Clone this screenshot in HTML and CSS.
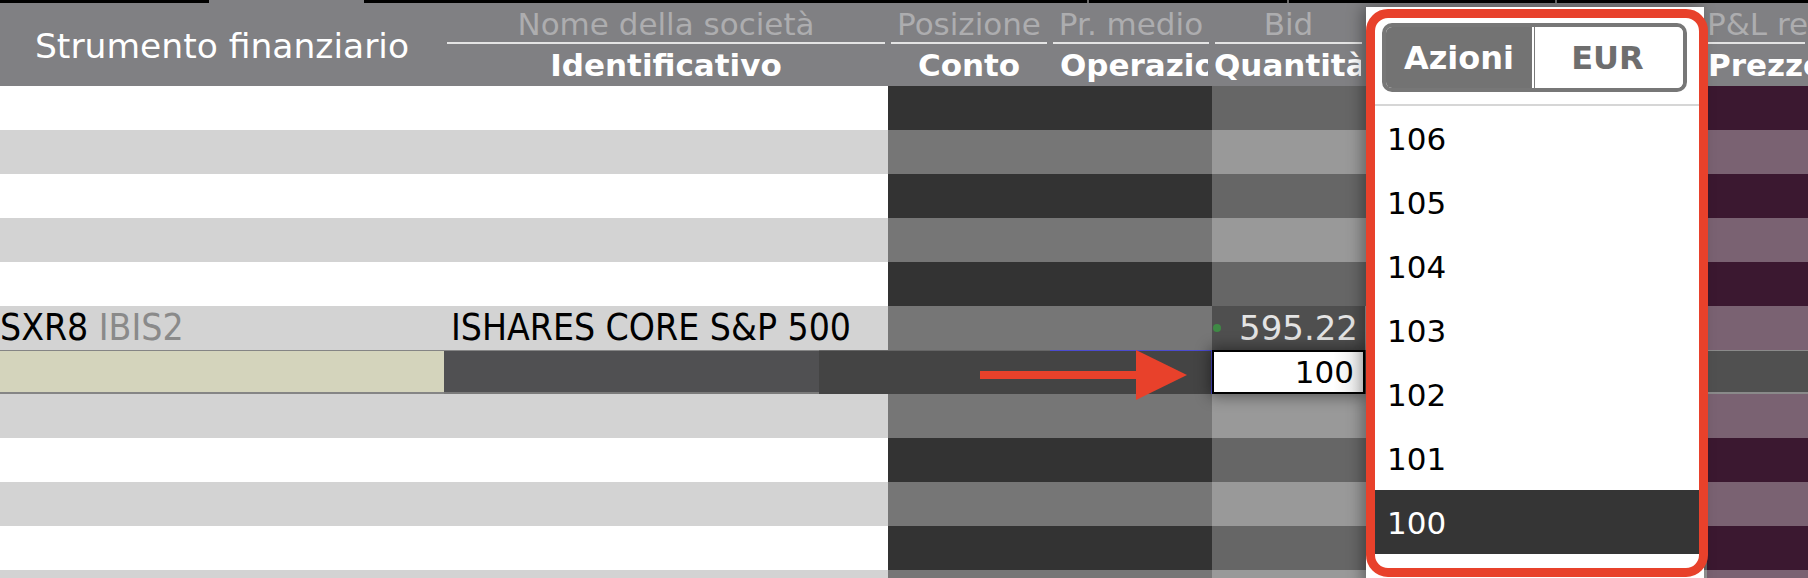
FILE: index.html
```html
<!DOCTYPE html>
<html lang="it">
<head>
    <meta charset="UTF-8">
    <meta name="viewport" content="width=device-width, initial-scale=1.0">
    <title>Portafoglio</title>
    <link rel="stylesheet" href="styles.css">
</head>
<body>
    <div class="screen">
        <div class="tabstrip">
            <span class="tab-lit"></span>
            <span class="tick tick-1"></span>
            <span class="tick tick-2"></span>
            <span class="tick tick-3"></span>
        </div>

        <div class="row head">
            <div class="hc hc-main">Strumento finanziario</div>
            <div class="hc">
                <div class="h-top">Nome della società</div>
                <div class="h-bot">Identificativo</div>
            </div>
            <div class="hc">
                <div class="h-top">Posizione</div>
                <div class="h-bot">Conto</div>
            </div>
            <div class="hc">
                <div class="h-top">Pr. medio</div>
                <div class="h-bot pad-op">Operazione</div>
            </div>
            <div class="hc">
                <div class="h-top">Bid</div>
                <div class="h-bot pad-q">Quantità</div>
            </div>
            <div class="hc">
                <div class="h-top"></div>
                <div class="h-bot"></div>
            </div>
            <div class="hc">
                <div class="h-top flush">P&amp;L realizzato</div>
                <div class="h-bot pad-pz">Prezzo medio</div>
            </div>
        </div>

        <div class="row even"><div class="c-a"></div><div class="c-b"></div><div class="c-c"></div><div class="c-d"></div><div class="c-e"></div><div class="c-f"></div><div class="c-g"></div></div>
        <div class="row odd"><div class="c-a"></div><div class="c-b"></div><div class="c-c"></div><div class="c-d"></div><div class="c-e"></div><div class="c-f"></div><div class="c-g"></div></div>
        <div class="row even"><div class="c-a"></div><div class="c-b"></div><div class="c-c"></div><div class="c-d"></div><div class="c-e"></div><div class="c-f"></div><div class="c-g"></div></div>
        <div class="row odd"><div class="c-a"></div><div class="c-b"></div><div class="c-c"></div><div class="c-d"></div><div class="c-e"></div><div class="c-f"></div><div class="c-g"></div></div>
        <div class="row even"><div class="c-a"></div><div class="c-b"></div><div class="c-c"></div><div class="c-d"></div><div class="c-e"></div><div class="c-f"></div><div class="c-g"></div></div>

        <!-- riga strumento -->
        <div class="row odd">
            <div class="c-a inst">SXR8 <span class="exch">IBIS2</span></div>
            <div class="c-b inst pad-name">ISHARES CORE S&amp;P 500</div>
            <div class="c-c"></div>
            <div class="c-d"></div>
            <div class="c-e bid"><span class="tick-dot"></span>595.22</div>
            <div class="c-f"></div>
            <div class="c-g"></div>
        </div>

        <!-- riga ordine -->
        <div class="row sel">
            <div class="s-a"></div>
            <div class="s-b"><div class="s-b1"></div><div class="s-b2"></div></div>
            <div class="s-c"></div>
            <div class="s-d"></div>
            <div class="s-e qty">100</div>
            <div class="s-f"></div>
            <div class="s-g"></div>
        </div>

        <div class="row odd"><div class="c-a"></div><div class="c-b"></div><div class="c-c"></div><div class="c-d"></div><div class="c-e"></div><div class="c-f"></div><div class="c-g"></div></div>
        <div class="row even"><div class="c-a"></div><div class="c-b"></div><div class="c-c"></div><div class="c-d"></div><div class="c-e"></div><div class="c-f"></div><div class="c-g"></div></div>
        <div class="row odd"><div class="c-a"></div><div class="c-b"></div><div class="c-c"></div><div class="c-d"></div><div class="c-e"></div><div class="c-f"></div><div class="c-g"></div></div>
        <div class="row even"><div class="c-a"></div><div class="c-b"></div><div class="c-c"></div><div class="c-d"></div><div class="c-e"></div><div class="c-f"></div><div class="c-g"></div></div>
        <div class="row odd"><div class="c-a"></div><div class="c-b"></div><div class="c-c"></div><div class="c-d"></div><div class="c-e"></div><div class="c-f"></div><div class="c-g"></div></div>

        <!-- selettore quantità -->
        <div class="picker">
            <div class="seg">
                <div class="seg-on">Azioni</div>
                <div class="seg-off">EUR</div>
            </div>
            <div class="pick-sep"></div>
            <div class="pick-item">106</div>
            <div class="pick-item">105</div>
            <div class="pick-item">104</div>
            <div class="pick-item">103</div>
            <div class="pick-item">102</div>
            <div class="pick-item">101</div>
            <div class="pick-item on">100</div>
        </div>

        <div class="callout"></div>
        <svg class="arrow" viewBox="0 0 208 50" xmlns="http://www.w3.org/2000/svg">
            <rect x="0" y="21" width="160" height="8" fill="#e8412b" />
            <polygon points="156,0 207,25 156,50" fill="#e8412b" />
        </svg>
    </div>
</body>
</html>
```

FILE: styles.css
```css
body {
    margin: 0;
    font-family: "DejaVu Sans", Verdana, sans-serif;
    background-color: #fff;
    overflow: hidden;
}

.screen {
    position: relative;
    width: 1808px;
    height: 578px;
    overflow: hidden;
}

/* striscia nera in alto */
.tabstrip {
    display: flex;
    height: 3px;
    background-color: #000;
}

.tab-lit {
    margin-left: 209px;
    width: 155px;
    background-color: #808083;
}

.tick {
    width: 2px;
    background-color: #6a6a6a;
}

.tick-1 {
    margin-left: 723px;
}

.tick-2 {
    margin-left: 198px;
}

.tick-3 {
    margin-left: 266px;
}

/* griglia */
.row {
    display: grid;
    grid-template-columns: 444px 444px 162px 162px 153px 342px 101px;
    height: 44px;
}

.row > div {
    box-sizing: border-box;
    min-width: 0;
}

.head {
    height: 83px;
    background-color: #808083;
    color: #fff;
}

.hc {
    display: flex;
    flex-direction: column;
    overflow: hidden;
}

.hc-main {
    justify-content: center;
    align-items: center;
    font-size: 34.5px;
    padding-top: 2px;
}

.h-top {
    height: 39px;
    line-height: 42px;
    margin: 0 3px;
    border-bottom: 2px solid #e4e4e4;
    color: #adadaf;
    font-size: 31px;
    text-align: center;
    white-space: nowrap;
}

.h-top.flush {
    margin-left: 0;
    text-align: left;
}

.h-bot {
    height: 42px;
    line-height: 42px;
    margin: 0 4px;
    font-size: 31px;
    font-weight: bold;
    text-align: center;
    white-space: nowrap;
    overflow: hidden;
}

.pad-op {
    text-align: left;
    padding-left: 6px;
}

.pad-q {
    text-align: left;
    margin-left: 2px;
}

.pad-pz {
    text-align: left;
    margin-left: 1px;
    margin-right: 0;
}

.even .c-a,
.even .c-b {
    background-color: #fff;
}

.even .c-c,
.even .c-d {
    background-color: #333;
}

.even .c-e,
.even .c-f {
    background-color: #666;
}

.even .c-g {
    background-color: #3b1830;
}

.odd .c-a,
.odd .c-b {
    background-color: #d3d3d3;
}

.odd .c-c,
.odd .c-d {
    background-color: #767676;
}

.odd .c-e,
.odd .c-f {
    background-color: #999;
}

.odd .c-g {
    background-color: #7a6272;
}

.inst {
    font-family: "DejaVu Sans Condensed", "DejaVu Sans", sans-serif;
    font-stretch: condensed;
    font-size: 37px;
    line-height: 44px;
    color: #000;
    white-space: nowrap;
    overflow: hidden;
}

.exch {
    color: #8a8a8a;
}

.pad-name {
    padding-left: 7px;
}

.odd .bid {
    display: flex;
    align-items: center;
    justify-content: space-between;
    padding: 0 7px 0 1px;
    background-color: #4f4f4f;
    color: #e4e4e4;
    font-size: 34px;
}

.tick-dot {
    width: 8px;
    height: 8px;
    border-radius: 50%;
    background-color: #3f8a45;
}

/* riga selezionata */
.sel .s-a {
    background-color: #d4d4bc;
    border-top: 1px solid #858585;
    border-bottom: 2px solid #858585;
}

.s-b {
    display: flex;
}

.s-b1 {
    width: 375px;
    background-color: #505052;
    border-top: 1px solid #858585;
    border-bottom: 2px solid #7a7a7a;
}

.s-b2 {
    flex: 1;
    background-color: #444;
    border-top: 1px solid #666;
}

.sel .s-c {
    background-color: #444;
    border-top: 1px solid #666;
}

.sel .s-d {
    background-color: #444;
    border-top: 1px solid #4b4bd0;
    border-right: 1px solid #4b4bd0;
}

.qty {
    position: relative;
    z-index: 1;
    border: 2px solid #000;
    background: linear-gradient(to right, #fff 80%, #e6e6e6);
    box-shadow: 0 0 14px 2px rgba(0, 0, 0, 0.45);
    padding-right: 9px;
    font-size: 31px;
    line-height: 40px;
    text-align: right;
    color: #000;
}

.sel .s-f {
    background-color: #505050;
}

.sel .s-g {
    background-color: #505050;
    border-top: 1px solid #8a8a8a;
    border-bottom: 2px solid #8a8a8a;
}

/* menu a tendina */
.picker {
    position: absolute;
    left: 1366px;
    top: 7px;
    width: 338px;
    height: 580px;
    background-color: #fff;
    box-shadow: -4px 0 14px rgba(0, 0, 0, 0.35);
    z-index: 2;
}

.seg {
    display: flex;
    box-sizing: border-box;
    width: 305px;
    height: 69px;
    margin: 16px 0 0 16px;
    border: 4px solid #777;
    border-radius: 10px;
    overflow: hidden;
    font-size: 32px;
    font-weight: bold;
}

.seg-on {
    width: 146px;
    display: flex;
    align-items: center;
    justify-content: center;
    background-color: #737373;
    color: #fff;
}

.seg-off {
    flex: 1;
    display: flex;
    align-items: center;
    justify-content: center;
    background: linear-gradient(to right, #fff 0 2px, #7a7a7a 2px 3px, #fff 3px);
    color: #6e6e6e;
}

.pick-sep {
    height: 2px;
    margin-top: 12px;
    background-color: #d6d6d6;
}

.pick-item {
    height: 64px;
    line-height: 66px;
    padding-left: 21px;
    font-size: 31px;
    color: #000;
}

.pick-item.on {
    background-color: #353535;
    color: #fff;
}

/* evidenziazione */
.callout {
    position: absolute;
    left: 1366px;
    top: 9px;
    width: 342px;
    height: 568px;
    box-sizing: border-box;
    border: 9px solid #e8412b;
    border-radius: 22px;
    z-index: 3;
}

.arrow {
    position: absolute;
    left: 980px;
    top: 350px;
    width: 208px;
    height: 50px;
    z-index: 3;
}
```
